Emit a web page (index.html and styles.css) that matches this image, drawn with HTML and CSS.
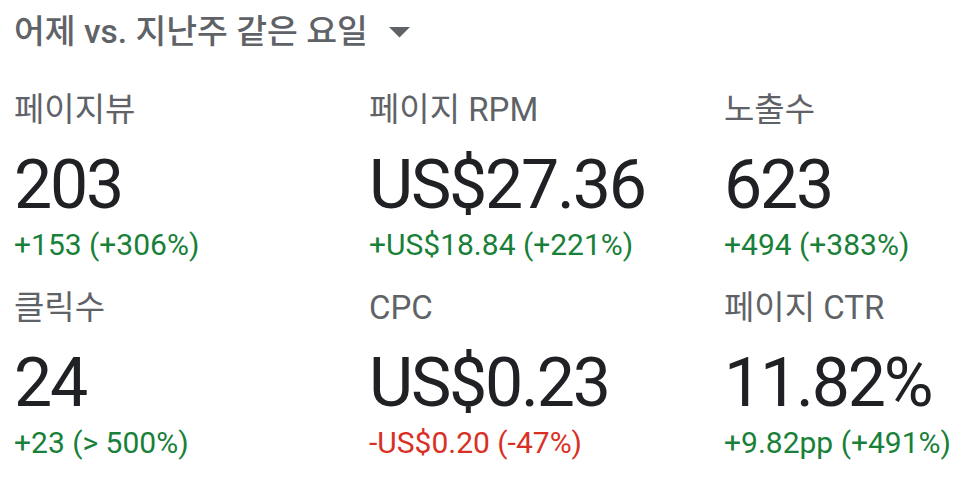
FILE: index.html
```html
<!DOCTYPE html>
<html lang="ko">
<head>
<meta charset="utf-8">
<link rel="stylesheet" href="styles.css">
</head>
<body>
<div class="page">
  <div class="header">
    <span>어제 vs. 지난주 같은 요일</span>
    <svg class="caret" width="21" height="11" viewBox="0 0 21 11"><path d="M0 0 L21 0 L10.5 10.5 Z" fill="#5f6368"/></svg>
  </div>
  <div class="metrics">
    <div class="card">
      <div class="label">페이지뷰</div>
      <div class="value">203</div>
      <div class="delta up">+153 (+306%)</div>
    </div>
    <div class="card">
      <div class="label">페이지 RPM</div>
      <div class="value">US$27.36</div>
      <div class="delta up">+US$18.84 (+221%)</div>
    </div>
    <div class="card">
      <div class="label">노출수</div>
      <div class="value">623</div>
      <div class="delta up">+494 (+383%)</div>
    </div>
    <div class="card">
      <div class="label">클릭수</div>
      <div class="value">24</div>
      <div class="delta up">+23 (&gt; 500%)</div>
    </div>
    <div class="card">
      <div class="label">CPC</div>
      <div class="value">US$0.23</div>
      <div class="delta down">-US$0.20 (-47%)</div>
    </div>
    <div class="card">
      <div class="label">페이지 CTR</div>
      <div class="value">11.82%</div>
      <div class="delta up">+9.82pp (+491%)</div>
    </div>
  </div>
</div>
</body>
</html>
```
FILE: styles.css
```css
html, body {
  margin: 0;
  padding: 0;
  background: #ffffff;
}
.page {
  padding: 8px 0 0 14px;
  font-family: Roboto, "Noto Sans CJK KR", sans-serif;
}
.header {
  display: flex;
  align-items: center;
  gap: 21px;
  font-size: 33.5px;
  font-weight: 500;
  line-height: 48px;
  color: #5f6368;
}
.caret {
  display: block;
}
.metrics {
  display: grid;
  grid-template-columns: 355px 355px 1fr;
  row-gap: 27px;
  margin-top: 36px;
}
.card {
  display: flex;
  flex-direction: column;
  white-space: nowrap;
}
.label {
  font-size: 33px;
  line-height: 36px;
  color: #5f6368;
}
.value {
  font-size: 68px;
  line-height: 80px;
  letter-spacing: -2.2px;
  margin-top: 17px;
  color: #202124;
}
.delta {
  font-size: 30px;
  line-height: 36px;
  margin-top: 2px;
}
.up {
  color: #188038;
}
.down {
  color: #d93025;
}
```
